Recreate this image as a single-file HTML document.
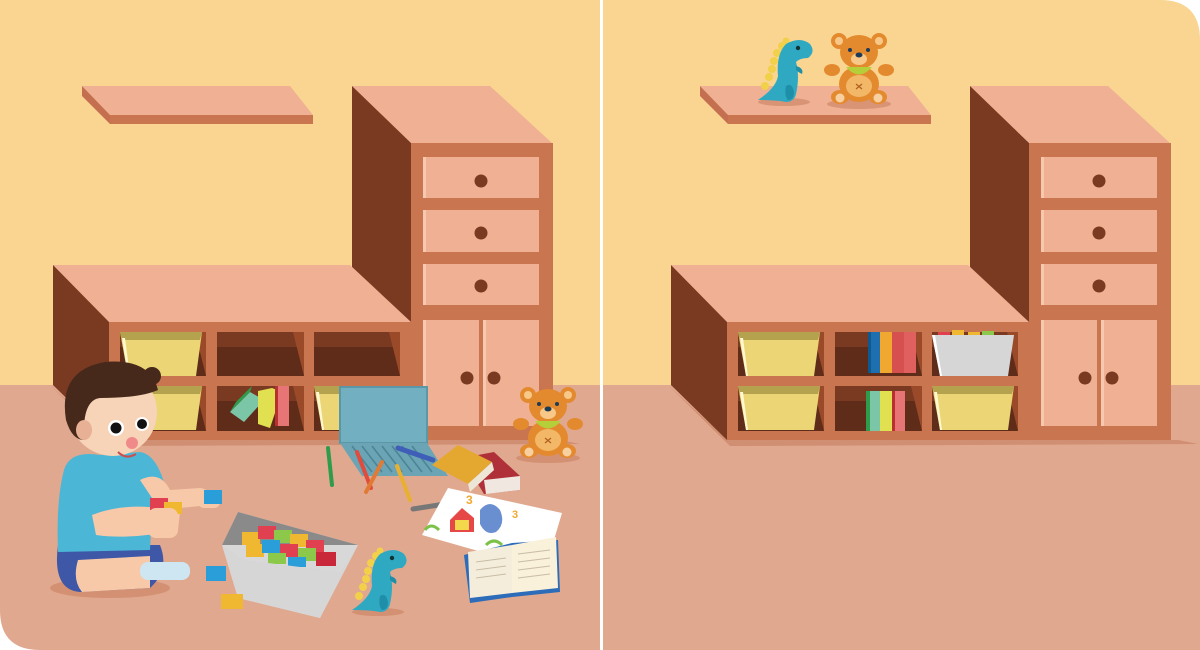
<!DOCTYPE html>
<html><head><meta charset="utf-8"><style>
html,body{margin:0;padding:0;background:#fff;width:1200px;height:650px;overflow:hidden}
svg{display:block}
</style></head><body>
<svg width="1200" height="650" viewBox="0 0 1200 650" xmlns="http://www.w3.org/2000/svg">
<defs>
<clipPath id="cl"><path d="M0 0H600V650H40Q0 650 0 610Z"/></clipPath>
<clipPath id="cr"><path d="M603 0H1160Q1200 0 1200 40V650H603Z"/></clipPath>
<g id="furn">
 <!-- shadow -->
 <polygon points="50,385 110,440 560,440 580,444 112,446" fill="#D08E72"/>
 <!-- floating shelf -->
 <polygon points="82,86 290,86 313,115 110,115" fill="#EFB093"/>
 <polygon points="82,86 110,115 110,124 82,96" fill="#C47050"/>
 <rect x="110" y="115" width="203" height="9" fill="#C97550"/>
 <!-- tall unit -->
 <polygon points="352,86 490,86 552,143 411,143" fill="#EFB093"/>
 <polygon points="352,86 411,143 411,440 352,385" fill="#7A3A22"/>
 <rect x="411" y="143" width="142" height="297" fill="#C97550"/>
 <rect x="423" y="157" width="116" height="41" fill="#EFB093"/>
 <rect x="423" y="210" width="116" height="42" fill="#EFB093"/>
 <rect x="423" y="264" width="116" height="41" fill="#EFB093"/>
 <rect x="423" y="320" width="56" height="106" fill="#EFB093"/>
 <rect x="483" y="320" width="56" height="106" fill="#EFB093"/>
 <rect x="423" y="157" width="3" height="41" fill="#F7C8B0"/><rect x="423" y="210" width="3" height="42" fill="#F7C8B0"/><rect x="423" y="264" width="3" height="41" fill="#F7C8B0"/><rect x="423" y="320" width="3" height="106" fill="#F7C8B0"/><rect x="483" y="320" width="3" height="106" fill="#F7C8B0"/>
 <circle cx="481" cy="181" r="6.5" fill="#7A3A22"/><circle cx="481" cy="233" r="6.5" fill="#7A3A22"/><circle cx="481" cy="286" r="6.5" fill="#7A3A22"/>
 <circle cx="467" cy="378" r="6.5" fill="#7A3A22"/><circle cx="494" cy="378" r="6.5" fill="#7A3A22"/>
 <!-- low unit -->
 <polygon points="53,265 350,265 411,322 109,322" fill="#EFB093"/>
 <polygon points="53,265 109,322 109,440 53,385" fill="#7A3A22"/>
 <rect x="109" y="322" width="302" height="118" fill="#C97550"/>
 <g fill="#5E2C18">
  <rect x="120" y="332" width="86" height="44"/><rect x="217" y="332" width="87" height="44"/><rect x="314" y="332" width="86" height="44"/>
  <rect x="120" y="386" width="86" height="45"/><rect x="217" y="386" width="87" height="45"/><rect x="314" y="386" width="86" height="45"/>
 </g>
 <g fill="#7A3A22">
  <rect x="120" y="332" width="86" height="15"/><rect x="217" y="332" width="87" height="15"/><rect x="314" y="332" width="86" height="15"/>
  <rect x="120" y="386" width="86" height="15"/><rect x="217" y="386" width="87" height="15"/><rect x="314" y="386" width="86" height="15"/>
 </g>
 <g fill="#9A4A28">
  <polygon points="195,332 206,332 206,376"/><polygon points="293,332 304,332 304,376"/><polygon points="389,332 400,332 400,376"/>
  <polygon points="195,386 206,386 206,431"/><polygon points="293,386 304,386 304,431"/><polygon points="389,386 400,386 400,431"/>
 </g>
</g>
<g id="bin">
 <polygon points="0,0 82,0 76,44 8,44" fill="#EBD574"/>
 <polygon points="0,0 82,0 80,8 2,8" fill="#B5A24F"/>
 <polygon points="2,6 5,6 10,44 8,44" fill="#FFF8D0"/>
</g>
<g id="bear">
 <ellipse cx="35" cy="72" rx="32" ry="5" fill="#C98060" opacity=".6"/>
 <circle cx="15" cy="9" r="8" fill="#E48A2E"/><circle cx="55" cy="9" r="8" fill="#E48A2E"/>
 <circle cx="15" cy="9" r="4" fill="#F8C888"/><circle cx="55" cy="9" r="4" fill="#F8C888"/>
 <ellipse cx="35" cy="52" rx="20" ry="18" fill="#E48A2E"/>
 <ellipse cx="35" cy="54" rx="13" ry="11" fill="#F2B868"/>
 <ellipse cx="8" cy="38" rx="8" ry="6" fill="#E48A2E"/><ellipse cx="62" cy="38" rx="8" ry="6" fill="#E48A2E"/>
 <ellipse cx="16" cy="65" rx="9" ry="7" fill="#E48A2E"/><ellipse cx="54" cy="65" rx="9" ry="7" fill="#E48A2E"/>
 <circle cx="16" cy="66" r="4.5" fill="#F8D0A0"/><circle cx="54" cy="66" r="4.5" fill="#F8D0A0"/>
 <ellipse cx="35" cy="20" rx="19" ry="17" fill="#E48A2E"/>
 <ellipse cx="35" cy="27" rx="8" ry="6" fill="#F8C888"/>
 <ellipse cx="35" cy="23" rx="3.5" ry="2.5" fill="#1E3B55"/>
 <circle cx="26" cy="18" r="2" fill="#1E3B55"/><circle cx="44" cy="18" r="2" fill="#1E3B55"/>
 <path d="M22 35 Q35 50 48 35 Z" fill="#B5CF3A"/>
 <path d="M32 52 l6 5 M38 52 l-6 5" stroke="#B06020" stroke-width="1.2"/>
</g>
<g id="dino">
 <ellipse cx="28" cy="66" rx="26" ry="4" fill="#C98060" opacity=".6"/>
 <g fill="#F2D04A"><circle cx="26" cy="10" r="4"/><circle cx="21" cy="17" r="4"/><circle cx="18" cy="25" r="4"/><circle cx="16" cy="33" r="4"/><circle cx="13" cy="41" r="4"/><circle cx="9" cy="50" r="4"/><circle cx="30" cy="5" r="3.5"/></g>
 <path d="M2 64 Q20 52 22 40 Q20 18 30 8 Q44 0 54 8 Q60 16 52 22 Q44 22 40 26 Q44 40 40 58 Q38 66 30 66 Q20 64 2 64Z" fill="#2FA9C2"/>
 <path d="M30 50 Q36 46 38 56 Q38 64 32 64 Q28 60 30 50Z" fill="#1F8EA8"/>
 <path d="M40 30 Q48 32 46 38 Q42 36 40 34Z" fill="#1F8EA8"/>
 <circle cx="42" cy="12" r="2.2" fill="#133"/>
</g>
</defs>

<!-- LEFT PANEL -->
<g clip-path="url(#cl)">
 <rect x="0" y="0" width="600" height="385" fill="#FAD591"/>
 <rect x="0" y="385" width="600" height="265" fill="#E0A88E"/>
 <use href="#furn"/>
 <use href="#bin" x="120" y="332"/>
 <use href="#bin" x="120" y="386"/>
 <use href="#bin" x="314" y="386"/>
 <!-- books in cubby -->
 <polygon points="230,412 250,392 264,400 244,422" fill="#7CC6A8"/><polygon points="230,412 250,392 252,386 236,402" fill="#2E9C4A"/>
 <polygon points="258,391 272,388 282,392 270,428 258,424" fill="#E0E050"/>
 <rect x="275" y="386" width="14" height="40" fill="#E87575"/><rect x="275" y="386" width="3" height="40" fill="#B83030"/>
 <!-- laptop -->
 <rect x="340" y="387" width="87" height="56" fill="#72AFC0" stroke="#5C97A8" stroke-width="2"/>
 <polygon points="340,443 427,443 448,476 362,476" fill="#6BA4B5"/>
 <g stroke="#4C8494" stroke-width="1.5"><line x1="352" y1="446" x2="372" y2="472"/><line x1="362" y1="446" x2="382" y2="472"/><line x1="372" y1="446" x2="392" y2="472"/><line x1="382" y1="446" x2="402" y2="472"/><line x1="392" y1="446" x2="412" y2="472"/><line x1="402" y1="446" x2="422" y2="472"/><line x1="412" y1="446" x2="432" y2="472"/></g>
 <!-- pencils -->
 <line x1="328" y1="448" x2="332" y2="485" stroke="#2E9C4A" stroke-width="4" stroke-linecap="round"/>
 <line x1="357" y1="452" x2="371" y2="488" stroke="#E04B3C" stroke-width="4" stroke-linecap="round"/>
 <line x1="382" y1="462" x2="366" y2="492" stroke="#E07A34" stroke-width="4" stroke-linecap="round"/>
 <line x1="397" y1="466" x2="410" y2="500" stroke="#E8B030" stroke-width="4" stroke-linecap="round"/>
 <line x1="398" y1="448" x2="433" y2="460" stroke="#3E5EB8" stroke-width="5" stroke-linecap="round"/>
 <line x1="413" y1="509" x2="445" y2="504" stroke="#777" stroke-width="5" stroke-linecap="round"/>
 <!-- books -->
 <polygon points="462,458 494,452 520,476 520,490 484,494" fill="#B0303A"/>
 <polygon points="484,480 520,476 520,490 486,494" fill="#F0E8E0"/>
 <polygon points="432,465 458,445 492,462 468,484" fill="#E4A830"/>
 <polygon points="468,484 492,462 494,470 470,492" fill="#EDE6D6"/>
 <!-- drawing paper -->
 <polygon points="448,488 562,513 545,570 422,535" fill="#FFFFFF"/>
 <path d="M450 520 l12 -12 l12 10 v14 h-24z" fill="#E64848"/><path d="M455 520 h14 v10 h-14z" fill="#F2D84A"/>
 <path d="M480 510 q10 -12 20 0 q6 14 -4 22 q-10 4 -16 -8z" fill="#6A8FD0"/>
 <text x="466" y="504" font-family="Liberation Sans, sans-serif" font-size="12" font-weight="bold" fill="#F0A830">3</text>
 <text x="512" y="518" font-family="Liberation Sans, sans-serif" font-size="11" font-weight="bold" fill="#F0A830">3</text>
 <path d="M425 530 q6 -8 14 0 M486 545 q8 -8 16 0" stroke="#7CC24A" stroke-width="3" fill="none"/>
 <!-- open book -->
 <polygon points="464,555 512,543 558,540 560,592 512,597 470,603" fill="#2C6CB8"/>
 <polygon points="468,552 512,545 512,593 470,598" fill="#F5EDDC"/>
 <polygon points="512,545 556,537 558,588 512,593" fill="#FAF1DA"/>
 <g stroke="#C8BCA4" stroke-width="1"><line x1="476" y1="562" x2="506" y2="558"/><line x1="476" y1="570" x2="506" y2="566"/><line x1="476" y1="578" x2="506" y2="574"/><line x1="518" y1="554" x2="550" y2="550"/><line x1="518" y1="562" x2="550" y2="558"/><line x1="518" y1="570" x2="550" y2="566"/><line x1="518" y1="578" x2="550" y2="574"/></g>
 <use href="#bear" x="513" y="386"/>
 <use href="#dino" x="350" y="546"/>
 <!-- lego box -->
 <polygon points="222,545 238,512 358,545 320,618 238,598" fill="#D8D8D8"/>
 <polygon points="222,545 238,512 358,545" fill="#8A8A8A"/>
 <g>
  <rect x="242" y="532" width="18" height="13" fill="#F0B830"/><rect x="258" y="526" width="18" height="13" fill="#E04050"/><rect x="274" y="530" width="18" height="13" fill="#8CC84A"/><rect x="290" y="534" width="18" height="13" fill="#F0B830"/><rect x="306" y="540" width="18" height="13" fill="#E04050"/>
  <rect x="246" y="544" width="18" height="13" fill="#F0B830"/><rect x="262" y="540" width="18" height="13" fill="#2A9ED8"/><rect x="280" y="544" width="18" height="13" fill="#E04050"/><rect x="298" y="548" width="18" height="13" fill="#8CC84A"/><rect x="316" y="552" width="20" height="14" fill="#C8283A"/>
  <rect x="268" y="553" width="18" height="11" fill="#8CC84A"/><rect x="288" y="557" width="18" height="10" fill="#2A9ED8"/>
 </g>
 <polygon points="222,545 244,560 340,572 358,545 320,618 238,598" fill="#D6D6D6"/>
 <rect x="206" y="566" width="20" height="15" fill="#2A9ED8"/>
 <rect x="221" y="594" width="22" height="15" fill="#F0B830"/>
 <!-- boy -->
 <ellipse cx="110" cy="588" rx="60" ry="10" fill="#C98060" opacity=".6"/>
 <path d="M58 545 Q52 590 80 592 L150 588 Q170 570 160 545Z" fill="#3E57A6"/>
 <path d="M64 470 Q70 450 100 455 L140 452 Q160 455 168 500 L152 510 L150 550 L58 552 Q56 500 64 470Z" fill="#4CB6D6"/>
 <path d="M140 480 Q160 470 170 490 L200 488 Q215 490 210 505 L160 510Z" fill="#F7C9A8"/>
 <rect x="198" y="490" width="22" height="18" rx="6" fill="#F7C9A8"/>
 <rect x="204" y="490" width="18" height="14" fill="#2A9ED8"/>
 <path d="M92 515 Q130 500 180 512 L178 530 Q130 540 96 535Z" fill="#F7C9A8"/>
 <rect x="150" y="498" width="18" height="12" fill="#E04050"/><rect x="164" y="502" width="18" height="12" fill="#F0B830"/>
 <rect x="148" y="508" width="30" height="30" rx="8" fill="#F7C9A8"/>
 <path d="M78 560 L150 556 L150 588 L82 592 Q72 580 78 560Z" fill="#F7C9A8"/>
 <rect x="140" y="562" width="50" height="18" rx="8" fill="#CDE6F2"/>
 <circle cx="113" cy="412" r="44" fill="#F7D3B8"/>
 <path d="M66 420 Q58 370 105 362 Q150 358 158 390 Q140 398 100 398 Q82 400 84 440 Q72 440 66 420Z" fill="#46291A"/>
 <circle cx="152" cy="376" r="9" fill="#46291A"/>
 <ellipse cx="84" cy="430" rx="8" ry="10" fill="#E8B094"/>
 <circle cx="116" cy="428" r="8" fill="#fff"/><circle cx="116" cy="428" r="5.5" fill="#111"/>
 <circle cx="142" cy="424" r="7" fill="#fff"/><circle cx="142" cy="424" r="5" fill="#111"/>
 <circle cx="132" cy="443" r="6" fill="#F08A8A"/>
 <path d="M118 452 Q126 460 136 454" stroke="#C85050" stroke-width="2" fill="none"/>
</g>

<!-- RIGHT PANEL -->
<g clip-path="url(#cr)">
 <rect x="603" y="0" width="597" height="385" fill="#FAD591"/>
 <rect x="603" y="385" width="597" height="265" fill="#E0A88E"/>
 <use href="#furn" x="618"/>
 <use href="#bin" x="738" y="332"/>
 <use href="#bin" x="738" y="386"/>
 <use href="#bin" x="932" y="386"/>
 <!-- grey box with lego -->
 <rect x="938" y="332" width="12" height="4" fill="#E04050"/><rect x="952" y="330" width="12" height="5" fill="#F0B830"/><rect x="968" y="332" width="12" height="4" fill="#F0B830"/><rect x="982" y="331" width="12" height="4" fill="#8CC84A"/>
 <polygon points="932,335 1014,335 1008,376 940,376" fill="#D6D6D6"/>
 <polygon points="932,335 935,335 942,376 940,376" fill="#FFF"/>
 <!-- books -->
 <rect x="868" y="332" width="12" height="41" fill="#1E6FB0"/><rect x="868" y="332" width="3" height="41" fill="#0E5A90"/>
 <rect x="880" y="332" width="12" height="41" fill="#F0A830"/>
 <rect x="892" y="332" width="12" height="41" fill="#D65050"/>
 <rect x="904" y="332" width="12" height="41" fill="#E06060"/>
 <rect x="868" y="391" width="12" height="40" fill="#7CC6A8"/><rect x="866" y="391" width="4" height="40" fill="#2E9C4A"/>
 <rect x="880" y="391" width="12" height="40" fill="#E0E050"/>
 <rect x="892" y="391" width="13" height="40" fill="#E87575"/><rect x="892" y="391" width="3" height="40" fill="#B83030"/>
 <use href="#dino" x="756" y="36"/>
 <use href="#bear" x="824" y="32"/>
</g>
<rect x="600" y="0" width="3" height="650" fill="#FFFFFF"/>
</svg>
</body></html>
